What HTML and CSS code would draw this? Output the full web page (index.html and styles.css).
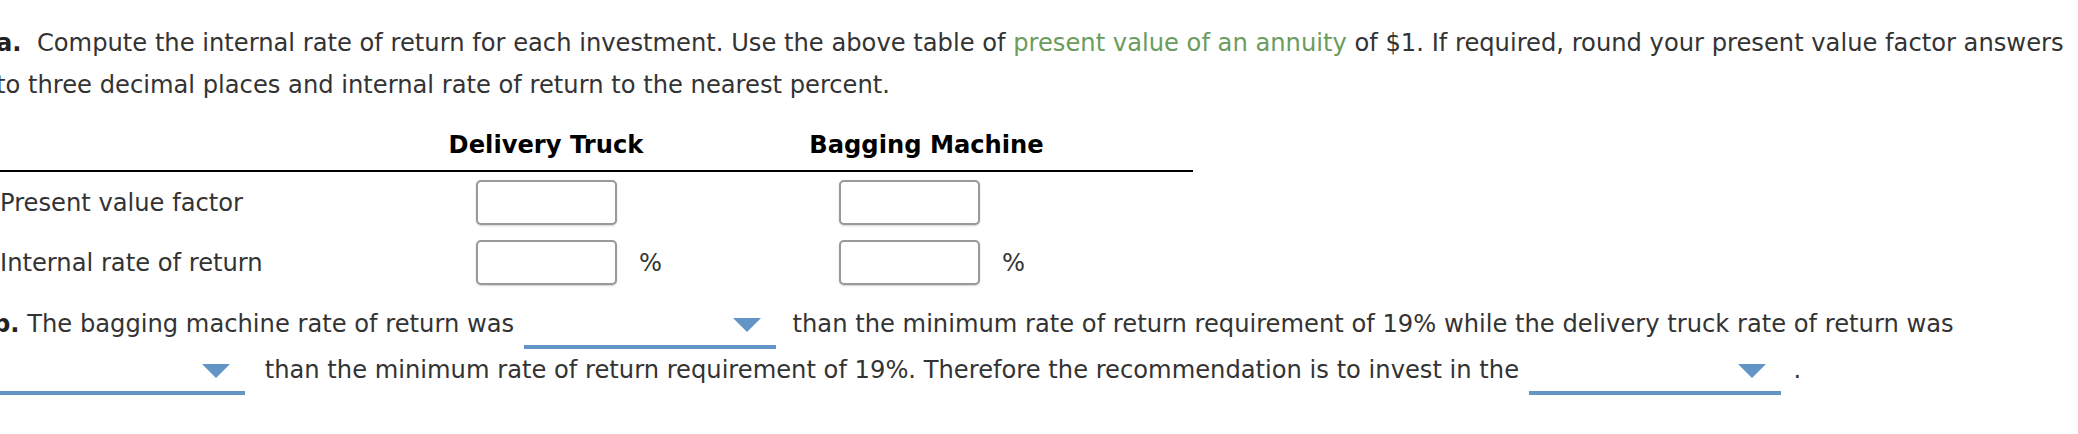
FILE: index.html
```html
<!DOCTYPE html>
<html lang="en">
<head>
<meta charset="utf-8">
<title>Internal rate of return</title>
<link rel="stylesheet" href="styles.css">
</head>
<body>
<div class="question">
  <p class="intro"><b class="label">a.</b>&nbsp; Compute the internal rate of return for each investment. Use the above table of <span class="link">present value of an annuity</span> of $1. If required, round your present value factor answers<br>to three decimal places and internal rate of return to the nearest percent.</p>

  <div class="grid">
    <div class="head"></div>
    <div class="head">Delivery Truck</div>
    <div class="head">Bagging Machine</div>

    <div class="row-label">Present value factor</div>
    <div class="cell cell-a"><input class="box" type="text" aria-label="Delivery truck present value factor"></div>
    <div class="cell cell-b"><input class="box" type="text" aria-label="Bagging machine present value factor"></div>

    <div class="row-label">Internal rate of return</div>
    <div class="cell cell-a"><input class="box" type="text" aria-label="Delivery truck internal rate of return"><span class="pct">%</span></div>
    <div class="cell cell-b"><input class="box" type="text" aria-label="Bagging machine internal rate of return"><span class="pct">%</span></div>
  </div>

  <p class="partb"><b class="label">b.</b> The bagging machine rate of return was <span class="dd dd-1"></span> than the minimum rate of return requirement of 19% while the delivery truck rate of return was<br><span class="dd dd-2"></span> than the minimum rate of return requirement of 19%. Therefore the recommendation is to invest in the <span class="dd dd-3"></span> .</p>
</div>
</body>
</html>
```
FILE: styles.css
```css
html, body {
  margin: 0;
  padding: 0;
  background: #fff;
}
body {
  font-family: "DejaVu Sans", Verdana, sans-serif;
  font-size: 24.2px;
  color: #333;
  overflow: hidden;
}
.question {
  margin-left: -4px;
}
.intro {
  margin: 0;
  padding-top: 22px;
  line-height: 42px;
  white-space: nowrap;
}
.label {
  font-weight: bold;
  color: #222;
}
.link {
  color: #6a9c5d;
}
.grid {
  margin-left: 4px;
  width: 1193px;
  display: grid;
  grid-template-columns: 432px 228px 533px;
  align-items: center;
}
.head {
  align-self: stretch;
  font-weight: bold;
  color: #000;
  text-align: center;
  line-height: 42px;
  padding-top: 18px;
  padding-bottom: 4px;
  border-bottom: 2px solid #000;
  white-space: nowrap;
}
.row-label {
  height: 60px;
  display: flex;
  align-items: center;
  white-space: nowrap;
  padding-top: 2px;
  box-sizing: border-box;
}
.cell {
  height: 60px;
  display: flex;
  align-items: center;
}
.cell-a { padding-left: 44px; }
.cell-b { padding-left: 179px; }
.box {
  width: 141px;
  height: 45px;
  box-sizing: border-box;
  border: 2px solid #999;
  border-radius: 5px;
  box-shadow: 0 1px 2px rgba(0,0,0,0.18);
  background: #fff;
  margin: 0;
  padding: 0 6px;
  font: inherit;
}
.pct {
  margin-left: 22px;
  padding-top: 2px;
}
.partb {
  margin: 11px 0 0 -3px;
  line-height: 43px;
  white-space: nowrap;
}
.dd {
  position: relative;
  display: inline-block;
  box-sizing: border-box;
  width: 252px;
  height: 40px;
  border-bottom: 4px solid #6394c6;
  vertical-align: -17px;
  margin: 0 9px 0 2px;
}
.dd::after {
  content: "";
  position: absolute;
  right: 15px;
  top: 9px;
  width: 0;
  height: 0;
  border-left: 14px solid transparent;
  border-right: 14px solid transparent;
  border-top: 14px solid #6394c6;
}
.dd-2 { margin-left: 0; margin-right: 12px; }
.dd-3 { margin-left: 2px; margin-right: 5px; }
```
